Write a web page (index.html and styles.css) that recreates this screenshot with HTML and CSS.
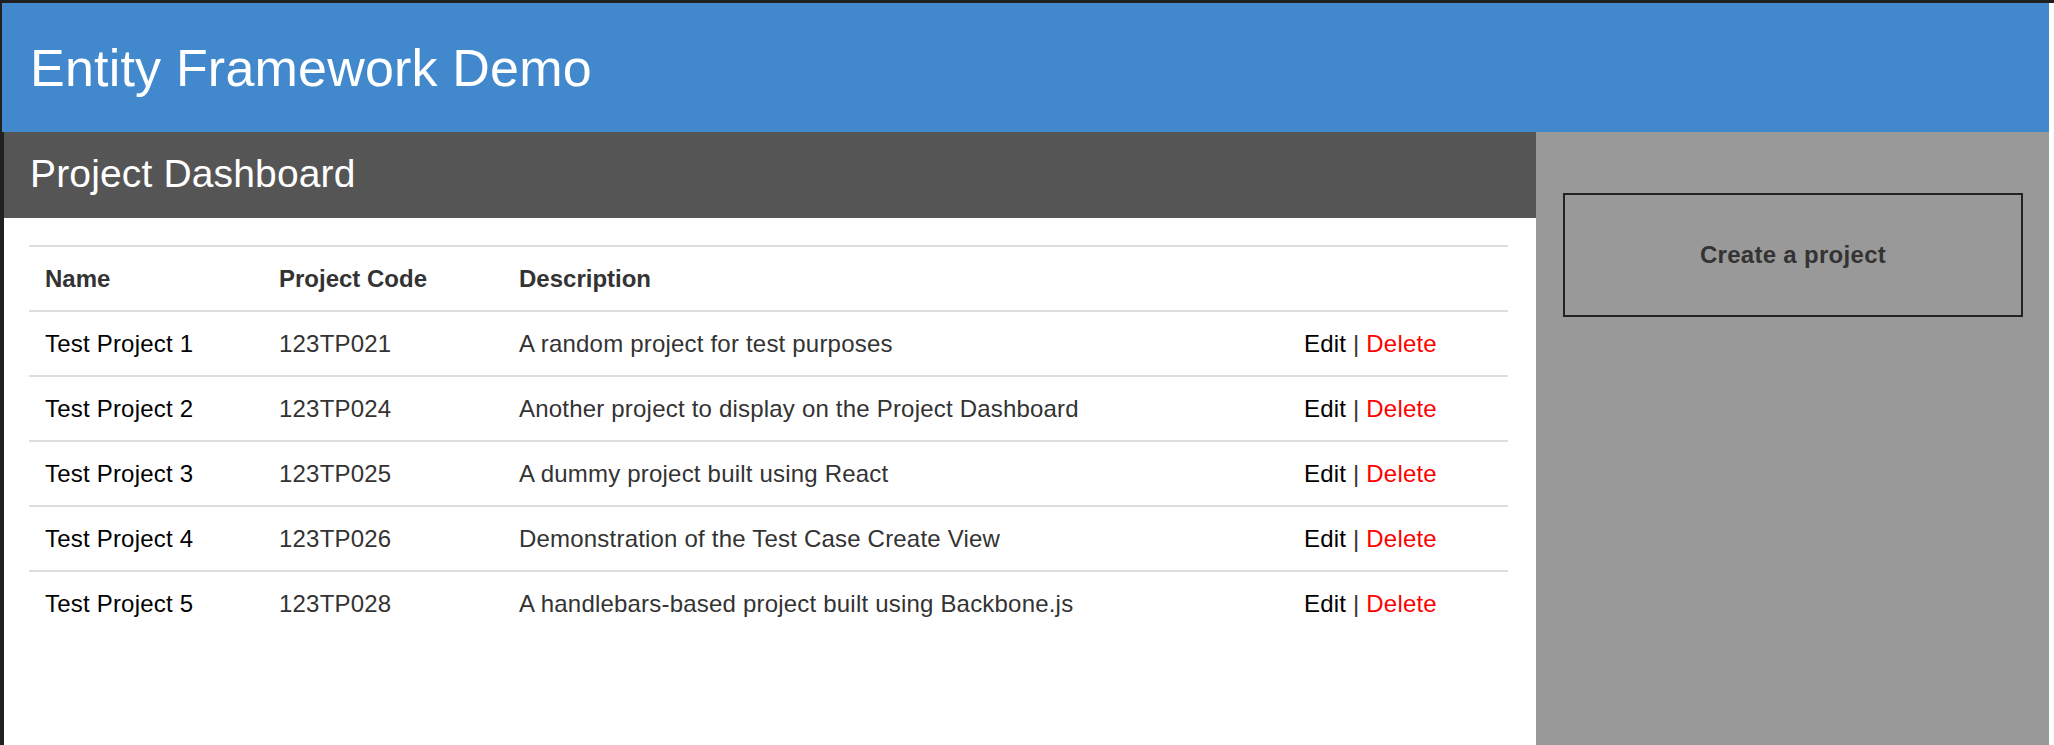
FILE: index.html
```html
<!DOCTYPE html>
<html lang="en">
<head>
<meta charset="utf-8">
<title>Entity Framework Demo</title>
<link rel="stylesheet" href="styles.css">
</head>
<body>
<div class="app">
  <header class="topbar">
    <h1 class="title">Entity Framework Demo</h1>
  </header>
  <div class="layout">
    <main class="main">
      <div class="section-head">
        <h2 class="section-title">Project Dashboard</h2>
      </div>
      <div class="content">
        <table class="projects">
          <colgroup>
            <col class="col-name">
            <col class="col-code">
            <col class="col-desc">
            <col class="col-actions">
          </colgroup>
          <thead>
            <tr><th>Name</th><th>Project Code</th><th>Description</th><th></th></tr>
          </thead>
          <tbody>
            <tr><td class="name">Test Project 1</td><td>123TP021</td><td>A random project for test purposes</td><td class="actions"><a class="edit">Edit</a> | <a class="delete">Delete</a></td></tr>
            <tr><td class="name">Test Project 2</td><td>123TP024</td><td>Another project to display on the Project Dashboard</td><td class="actions"><a class="edit">Edit</a> | <a class="delete">Delete</a></td></tr>
            <tr><td class="name">Test Project 3</td><td>123TP025</td><td>A dummy project built using React</td><td class="actions"><a class="edit">Edit</a> | <a class="delete">Delete</a></td></tr>
            <tr><td class="name">Test Project 4</td><td>123TP026</td><td>Demonstration of the Test Case Create View</td><td class="actions"><a class="edit">Edit</a> | <a class="delete">Delete</a></td></tr>
            <tr><td class="name">Test Project 5</td><td>123TP028</td><td>A handlebars-based project built using Backbone.js</td><td class="actions"><a class="edit">Edit</a> | <a class="delete">Delete</a></td></tr>
          </tbody>
        </table>
      </div>
    </main>
    <aside class="sidebar">
      <button class="create-btn" type="button">Create a project</button>
    </aside>
  </div>
</div>
</body>
</html>
```
FILE: styles.css
```css
html, body {
  height: 100%;
}

body {
  margin: 0;
  box-sizing: border-box;
  border-top: 3px solid #202020;
  background: #fff;
  font-family: "Liberation Sans", Arial, sans-serif;
}

.app {
  margin-right: 5px;
  border-left: 2px solid #202020;
  min-height: 742px;
  display: flex;
  flex-direction: column;
}

.topbar {
  background: #4288cc;
  height: 129px;
  display: flex;
  align-items: center;
  padding-left: 28px;
}

.title {
  margin: 0;
  font-size: 52px;
  font-weight: normal;
  line-height: 1;
  letter-spacing: 0.2px;
  color: #fff;
}

.layout {
  flex: 1;
  display: flex;
}

.main {
  width: 1532px;
  border-left: 2px solid #202020;
  background: #fff;
}

.section-head {
  background: #555;
  height: 86px;
  display: flex;
  align-items: center;
  padding-left: 26px;
}

.section-title {
  margin: 0 0 3px 0;
  font-size: 39px;
  font-weight: normal;
  line-height: 1;
  letter-spacing: 0.15px;
  color: #fff;
}

.content {
  padding: 27px 28px 0 25px;
}

.projects {
  width: 100%;
  border-collapse: separate;
  border-spacing: 0;
  table-layout: fixed;
  font-size: 24px;
  color: #333;
}

.col-name { width: 234px; }
.col-code { width: 240px; }
.col-actions { width: 220px; }

.projects th,
.projects td {
  border-top: 2px solid #ddd;
  padding: 18px 16px;
  line-height: 27px;
  text-align: left;
  vertical-align: middle;
  white-space: nowrap;
}

.projects td {
  letter-spacing: 0.2px;
}

.projects th {
  font-weight: bold;
  color: #333;
}

.projects .name {
  color: #000;
}

.actions {
  color: #333;
}

.edit {
  color: #000;
  text-decoration: none;
}

.delete {
  color: #f00;
  text-decoration: none;
}

.sidebar {
  flex: 1;
  background: #999;
  padding: 61px 26px 0 27px;
}

.create-btn {
  display: block;
  width: 100%;
  height: 124px;
  margin: 0;
  border: 2px solid #222;
  background: transparent;
  font-family: "Liberation Sans", Arial, sans-serif;
  font-size: 24px;
  font-weight: bold;
  letter-spacing: 0.3px;
  color: #333;
  cursor: pointer;
}
```
